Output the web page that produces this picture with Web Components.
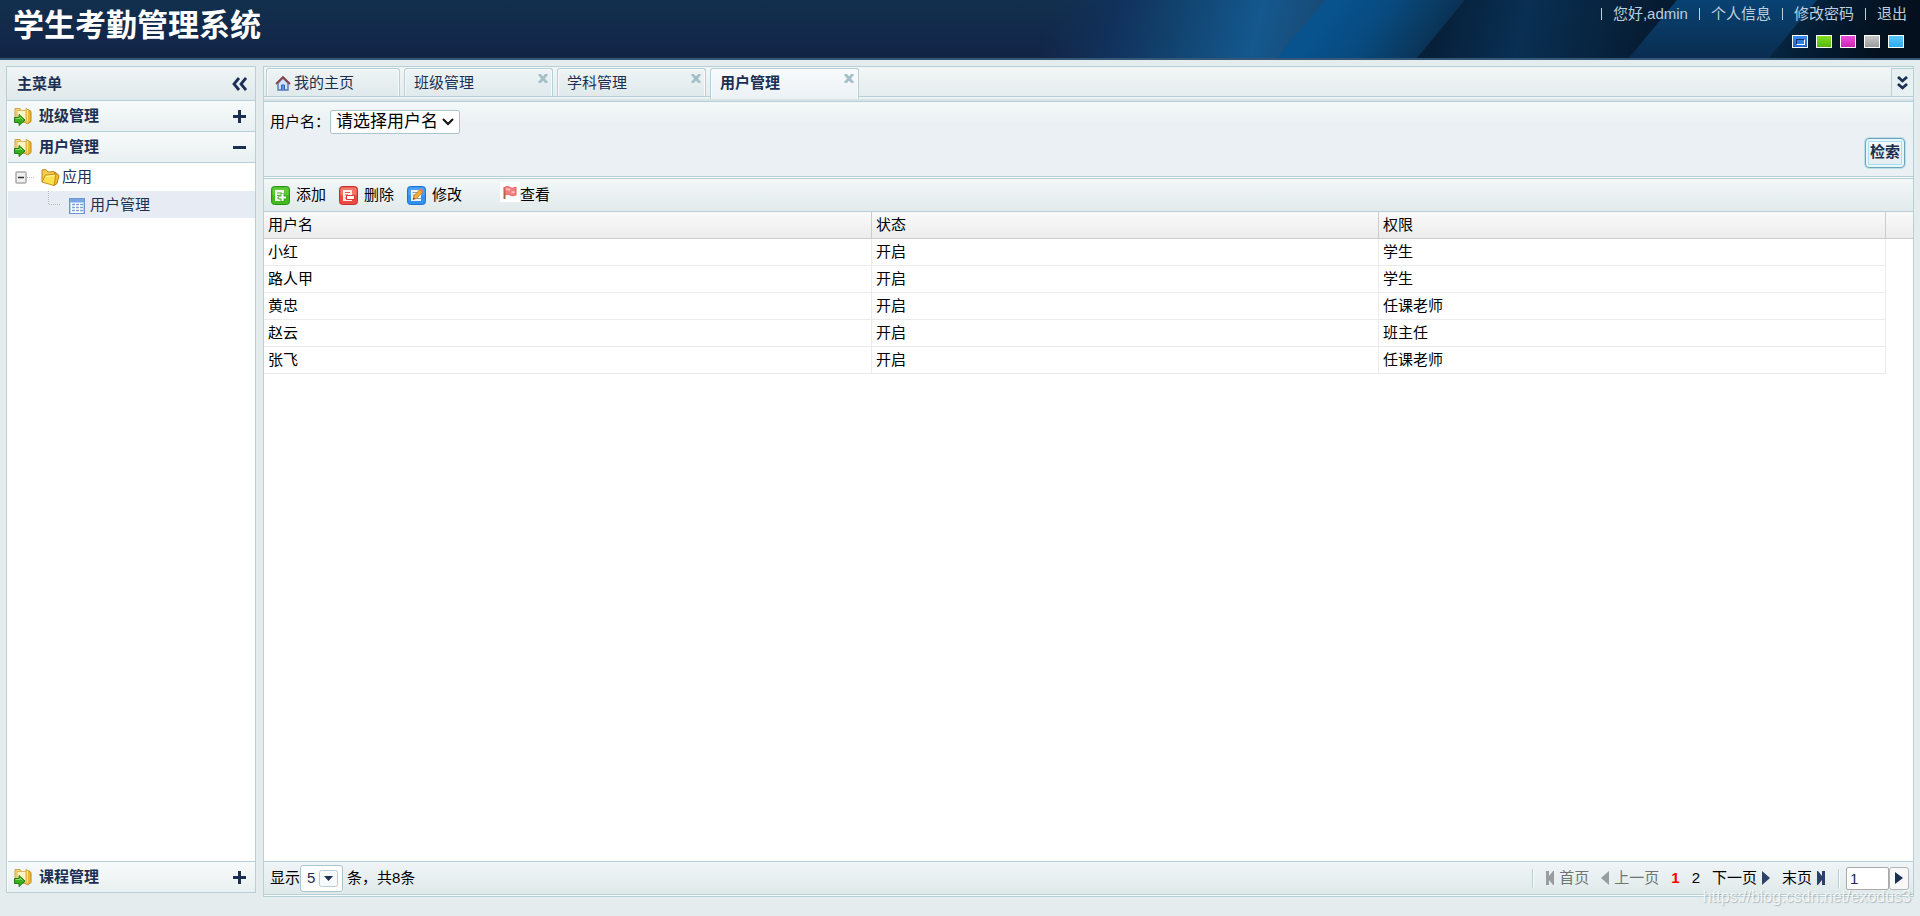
<!DOCTYPE html>
<html lang="zh-CN">
<head>
<meta charset="utf-8">
<title>学生考勤管理系统</title>
<style>
  html, body { margin: 0; height: 100%; }
  body {
    font: 15px/20px "Liberation Sans", "Noto Sans CJK SC", sans-serif;
    color: #000;
    background: #e4ecee;
    --line: #b7cfd6;
    --ink: #1b2f52;
  }
</style>
</head>
<body>
<attendance-app></attendance-app>

<script>
const define = (name, html, setup) => customElements.define(name, class extends HTMLElement {
  connectedCallback() {
    if (this.shadowRoot) return;
    const root = this.attachShadow({ mode: 'open' });
    const template = document.createElement('template');
    template.innerHTML = html;
    root.append(template.content.cloneNode(true));
    if (setup) setup(this, root);
  }
});

const icons = {
  module: `<svg width="20" height="20" viewBox="0 0 20 20"><path d="M2 2.500h5l2 3h4v11H2z" fill="#f4d98a" stroke="#c9a24a"/><path d="M13 2.500l3 1.500v12.500l-3 1z" fill="#fbe285" stroke="#cfa02c"/><path d="M16 4l2 1.500v10L14.500 18" fill="#e9b831" stroke="#bd861b"/><path d="M4 4.500h9v11H4z" fill="#fdf3c2" stroke="#dfb650"/><path d="M1.500 11.500H6V8.500l6 5.500-6 5.500v-3H1.500z" fill="#37b01e" stroke="#1f7d13"/><path d="M2.500 12.500H7V11l2.500 2.500" fill="none" stroke="#8fe064"/></svg>`,
  folder: `<svg width="19" height="19" viewBox="0 0 19 19"><path d="M1 14V2l4-.5 2 2.500 6-.5 1 3" fill="#f5cd4f" stroke="#bd8a1d"/><path d="M14 4l4 3.500-2 8-3 2z" fill="#f2bd2d" stroke="#b97f14"/><path d="M1 14L4.500 7 15 6l-2 11.500z" fill="#fbe04f" stroke="#c4901c"/><path d="M5 8.500l8.500-1" stroke="#fff6b0" fill="none"/></svg>`,
  sheet: `<svg width="16" height="16" viewBox="0 0 16 16"><rect x=".5" y=".5" width="15" height="15" fill="#fff" stroke="#6d96d3"/><path d="M1 1h14v3H1z" fill="#7ba6e4"/><path d="M1.500 4v11M14.500 4v11M1 4.500h14" stroke="#b8d0f2"/><path d="M3 6.500h3M7 6.500h3M11 6.500h3M3 9.500h3M7 9.500h3M11 9.500h3M3 12.500h3M7 12.500h3M11 12.500h3" stroke="#7d9fd2" stroke-width="1.600"/></svg>`,
  add: `<svg width="19" height="19" viewBox="0 0 19 19"><rect x=".5" y=".5" width="18" height="18" rx="3" fill="#43b91f" stroke="#289311"/><rect x="1.500" y="1.500" width="16" height="8" rx="2" fill="#6fd145" opacity=".65"/><path d="M4 4h9v11H4z" fill="#f2faee"/><path d="M6 7h5M6 9.500h3M6 12h3" stroke="#58a83d"/><path d="M11.500 7.500v8M7.500 11.500h8" stroke="#33a114" stroke-width="4"/><path d="M11.500 8v7M8 11.500h7" stroke="#fff" stroke-width="2.200"/></svg>`,
  remove: `<svg width="19" height="19" viewBox="0 0 19 19"><rect x=".5" y=".5" width="18" height="18" rx="3" fill="#e84c42" stroke="#c92c2c"/><rect x="1.500" y="1.500" width="16" height="8" rx="2" fill="#f58b80" opacity=".7"/><path d="M4 4h9v11H4z" fill="#fdeeea"/><path d="M6 6.500h5M6 9h3M6 12h2" stroke="#d95d50"/><rect x="7.500" y="9.500" width="8" height="4" fill="#fff" stroke="#dd3c34"/></svg>`,
  edit: `<svg width="19" height="19" viewBox="0 0 19 19"><rect x=".5" y=".5" width="18" height="18" rx="3" fill="#3290ef" stroke="#1e72d2"/><rect x="1.500" y="1.500" width="16" height="8" rx="2" fill="#62adf7" opacity=".6"/><path d="M4 4h10v11H4z" fill="#eef3f8"/><path d="M5.500 6.500h5M5.500 9h4M10 12.500h4" stroke="#8b9eb4"/><path d="M6 13.500l.8-3.500 6-6.500 3 2.500-6.300 6.500z" fill="#f5ae31" stroke="#a77320" stroke-width=".7"/><path d="M12.300 3.500L13.600 2.200l2.700 2.300-1 1.800z" fill="#ee7a5f"/><path d="M6 13.500l.5-1.800 1.500 1z" fill="#333"/></svg>`,
  flag: `<svg width="20" height="20" viewBox="0 0 20 20"><rect width="20" height="20" fill="#fff"/><path d="M4.500 5v12" stroke="#a36a43" stroke-width="2"/><path d="M4.500 5.500c2-1.500 4.500-1 5.500 0s3 1 6-.5v8c-2.500 1-4.500 1-6 0s-3-.9-4.500 0z" fill="#f47f7f" stroke="#e56262"/><path d="M6 7.500c2-1 3-.3 4 .5M11.500 10c1 .3 2 .2 3-.2" fill="none" stroke="#fcc5c5" stroke-width="1.800"/></svg>`,
  home: `<svg width="16" height="16" viewBox="0 0 16 16"><path d="M3 8v7h10V8L8 3z" fill="#cfe0f7" stroke="#5678b8" stroke-width="1.400"/><path d="M6.500 15v-5h3v5" fill="#5b92e8" stroke="#2f66bd"/><path d="M1 9l7-7 7 7" fill="none" stroke="#8a4144" stroke-width="1.800"/></svg>`
};
const putIcon = (host, root) => {
  const box = root.querySelector('.icon');
  if (box) box.innerHTML = icons[host.getAttribute('icon')] || '';
};

define('header-art', `
<style>
  :host { display: block; position: absolute; top: 0; right: 0; width: 900px; height: 58px; }
  svg { display: block; }
</style>
<svg width="900" height="58" viewBox="1020 0 900 58" aria-hidden="true">
  <defs>
    <linearGradient id="a" gradientUnits="userSpaceOnUse" x1="1050" y1="0" x2="1310" y2="60"><stop offset="0" stop-color="#133052" stop-opacity="0"/><stop offset=".25" stop-color="#11315b"/><stop offset=".5" stop-color="#124470"/><stop offset=".78" stop-color="#14588e"/><stop offset="1" stop-color="#194b76"/></linearGradient>
    <linearGradient id="b" gradientUnits="userSpaceOnUse" x1="1340" y1="0" x2="1430" y2="65"><stop offset="0" stop-color="#08528e"/><stop offset=".4" stop-color="#084a7e"/><stop offset=".75" stop-color="#0a3a61"/><stop offset="1" stop-color="#0b2c4e"/></linearGradient>
    <linearGradient id="c" gradientUnits="userSpaceOnUse" x1="1440" y1="0" x2="1650" y2="50"><stop offset="0" stop-color="#071f38"/><stop offset=".4" stop-color="#092f52"/><stop offset=".75" stop-color="#08243f"/><stop offset="1" stop-color="#061b31"/></linearGradient>
    <linearGradient id="d" x1="0" y1="0" x2="0" y2="1"><stop offset="0" stop-color="#084273"/><stop offset="1" stop-color="#0a2d51"/></linearGradient>
    <linearGradient id="e" gradientUnits="userSpaceOnUse" x1="1790" y1="0" x2="1880" y2="50"><stop offset="0" stop-color="#072844"/><stop offset=".5" stop-color="#051a2f"/><stop offset="1" stop-color="#04101d"/></linearGradient>
  </defs>
  <path d="M1020 0h306l-47 58h-259z" fill="url(#a)"/>
  <path d="M1325 0h140l-48 58h-140z" fill="url(#b)"/>
  <path d="M1465 0h212l-48 58h-212z" fill="url(#c)"/>
  <path d="M1677 0h140l-48 58h-140z" fill="url(#d)"/>
  <path d="M1817 0h103v58h-151z" fill="url(#e)"/>
</svg>`);

define('app-header', `
<style>
  :host {
    display: flex; justify-content: space-between; position: relative;
    height: 58px; flex: none; border-bottom: 2px solid #365878;
    background: linear-gradient(#12304d, #12274a 70%, #132445);
  }
  h1 { margin: 0; padding: 5px 13px; font-size: 31px; line-height: 42px; color: #fff; position: relative; }
  .side { position: relative; display: flex; flex-direction: column; align-items: flex-end; gap: 11px; padding: 4px 13px 0 0; }
  nav { display: flex; gap: 11px; color: #bccfdd; }
  nav > * { display: flex; align-items: center; gap: 11px; line-height: 20px; color: inherit; text-decoration: none; }
  nav > *::before { content: ""; width: 1px; height: 12px; background: #bccfdd; }
  .themes { display: flex; gap: 8px; padding-right: 3px; }
  .themes button { width: 16px; height: 13px; padding: 0; border: 1px solid #fff; background: linear-gradient(var(--top), var(--bottom)); }
  .themes button.on { display: flex; align-items: center; justify-content: center; }
  .on i { width: 7px; height: 4px; border: 1px solid #fff; border-top-color: #173461; border-left-color: #173461; background: #2f7fe0; }
</style>
<header-art></header-art>
<h1>学生考勤管理系统</h1>
<div class="side">
  <nav><span>您好,admin</span><a href="#info">个人信息</a><a href="#password">修改密码</a><a href="#logout">退出</a></nav>
  <div class="themes">
    <button class="on" aria-label="蓝色主题" style="--top:#3c8df0;--bottom:#1f62c8"><i></i></button>
    <button aria-label="绿色主题" style="--top:#83de1f;--bottom:#55b912"></button>
    <button aria-label="粉色主题" style="--top:#ee4fdc;--bottom:#cc25b6"></button>
    <button aria-label="灰色主题" style="--top:#c8c8c8;--bottom:#9a9a9a"></button>
    <button aria-label="浅蓝主题" style="--top:#5cc6fb;--bottom:#2eaaf0"></button>
  </div>
</div>`);

define('menu-item', `
<style>
  :host { display: block; flex: none; border-bottom: 1px solid var(--line); }
  :host([last]) { border-top: 1px solid var(--line); border-bottom: 0; }
  button {
    display: flex; align-items: center; gap: 6px; width: 100%; height: 30px; padding: 0 9px 0 5px;
    border: 0; background: linear-gradient(#f7fafa, #e9f0f1);
    font: bold 15px/20px "Liberation Sans", "Noto Sans CJK SC", sans-serif; color: var(--ink); text-align: left;
  }
  .icon { display: flex; }
  .label { flex: 1; }
  .sign { display: block; }
</style>
<button><span class="icon">${icons.module}</span><span class="label"><slot></slot></span>
<svg class="sign" width="13" height="13" viewBox="0 0 13 13"><path stroke="#1b2f52" stroke-width="3"/></svg></button>`,
(host, root) => {
  const open = host.hasAttribute('open');
  root.querySelector('.sign path').setAttribute('d', open ? 'M0 6.5h13' : 'M0 6.5h13M6.5 0v13');
  root.querySelector('button').setAttribute('aria-expanded', open);
});

define('menu-tree', `
<style>
  :host { display: block; flex: 1; color: var(--ink); }
  .row { display: flex; align-items: center; height: 28px; padding-left: 7px; }
  .leaf { height: 27px; padding-left: 40px; background: #e7ecf4; color: inherit; text-decoration: none; }
  svg { flex: none; }
  .folder { display: flex; margin: 0 2px 0 7px; }
  .sheet { display: flex; padding: 2px 5px 0 8px; }
</style>
<div class="row">
  <svg width="19" height="13" viewBox="0 0 19 13"><rect x="1" y="1" width="10" height="11" rx="1" fill="#f0f0f0" stroke="#aaa" stroke-width="1.500"/><path d="M3 6.500h6" stroke="#333" stroke-width="1.500"/><path d="M12 6.500h7" stroke="#bbb" stroke-dasharray="1 1"/></svg>
  <span class="folder">${icons.folder}</span><span>应用</span>
</div>
<a class="row leaf" href="#users">
  <svg width="13" height="27" viewBox="0 0 13 27"><path d="M.5 0v13.500H13" fill="none" stroke="#bbb" stroke-dasharray="1 1"/></svg>
  <span class="sheet">${icons.sheet}</span><span>用户管理</span>
</a>`);

define('side-menu', `
<style>
  :host { display: flex; flex-direction: column; width: 248px; border: 1px solid var(--line); background: #fff; flex: none; }
  header {
    display: flex; align-items: center; justify-content: space-between; height: 33px; padding: 0 8px 0 10px;
    border-bottom: 1px solid var(--line); background: linear-gradient(#f0f5f6, #e0e9eb);
    font-weight: bold; color: var(--ink);
  }
  header button { display: flex; padding: 0; border: 0; background: none; }
  .items { display: flex; flex-direction: column; flex: 1; padding-left: 1px; }
</style>
<header><span>主菜单</span><button aria-label="收起菜单"><svg width="15" height="14" viewBox="0 0 15 14"><path d="M7 1L2 7l5 6M14 1L9 7l5 6" fill="none" stroke="#1b2f52" stroke-width="2.800"/></svg></button></header>
<div class="items">
  <menu-item>班级管理</menu-item>
  <menu-item open>用户管理</menu-item>
  <menu-tree></menu-tree>
  <menu-item last>课程管理</menu-item>
</div>`);

define('tab-item', `
<style>
  :host {
    display: flex; box-sizing: border-box; width: 149px; height: 28px; padding: 0 4px 0 9px;
    border: 1px solid var(--line); border-bottom: 0; border-radius: 3px 3px 0 0;
    background: linear-gradient(#eef4f5, #e0e9eb); box-shadow: inset 1px 1px #f8fbfb, inset -1px 0 #f8fbfb; color: var(--ink);
  }
  :host([icon]) { width: 134px; padding-left: 8px; }
  :host([active]) { height: 31px; font-weight: bold; background: linear-gradient(#f8fbfd, #ebf1f5); }
  a { display: flex; align-items: center; gap: 3px; flex: 1; height: 27px; color: inherit; text-decoration: none; }
  .icon { display: flex; }
  .icon:empty { display: none; }
  button { display: flex; align-self: flex-start; padding: 5px 0 0; border: 0; background: none; }
  :host([icon]) button { display: none; }
</style>
<a href="#tab"><span class="icon"></span><span><slot></slot></span></a>
<button aria-label="关闭"><svg width="10" height="9" viewBox="0 0 10 9"><path d="M1 0l8 9M9 0L1 9" stroke="#a3bfc7" stroke-width="2.800"/></svg></button>`, putIcon);

define('tab-strip', `
<style>
  :host { display: flex; align-items: flex-start; gap: 4px; flex: none; height: 33px; padding: 1px 0 0 2px;
    border-bottom: 1px solid var(--line);
    background: linear-gradient(transparent 29px, var(--line) 29px, var(--line) 30px, #edf3f5 30px, #edf3f5 32px, #d6e3e7 32px), linear-gradient(#f2f6f6, #e5edef 29px); }
  .more { display: flex; align-items: center; justify-content: center; width: 22px; height: 28px; margin-left: auto; padding: 0;
    border: 1px solid var(--line); border-width: 1px 0 0 1px; background: #e9f0f2; }
</style>
<tab-item icon="home">我的主页</tab-item>
<tab-item>班级管理</tab-item>
<tab-item>学科管理</tab-item>
<tab-item active>用户管理</tab-item>
<button class="more" aria-label="更多标签"><svg width="11" height="14" viewBox="0 0 11 14"><path d="M1 1l4.500 4L10 1M1 8l4.500 4L10 8" fill="none" stroke="#1b2f52" stroke-width="2.800"/></svg></button>`);

define('search-panel', `
<style>
  :host { display: flex; justify-content: space-between; box-sizing: border-box; flex: none; height: 75px; padding: 8px 8px 8px 6px;
    border-bottom: 1px solid var(--line); background: linear-gradient(#f3f8f8, #ebf0f4 22px, #ebf0f4); }
  .field { display: flex; align-items: center; align-self: flex-start; }
  select { appearance: none; width: 130px; height: 24px; padding: 0 0 0 5px; border: 1px solid #a9c5cd; border-radius: 2px; color: #000;
    font: 17px/22px "Liberation Sans", "Noto Sans CJK SC", sans-serif;
    background: #fff url("data:image/svg+xml,%3Csvg xmlns='http://www.w3.org/2000/svg' width='12' height='8'%3E%3Cpath d='M1 1l5 5 5-5' fill='none' stroke='%23111' stroke-width='2'/%3E%3C/svg%3E") no-repeat right 5px center; }
  .go { align-self: flex-end; box-sizing: border-box; width: 40px; height: 30px; padding: 0 0 3px; border: 1px solid #6fa3b8; border-radius: 4px;
    background: linear-gradient(#f5f9fa, #e3ecf0); box-shadow: 0 0 0 1px #b9dfeb, inset 0 0 0 2px #e6f6fb, inset 0 0 0 3px #a8def0;
    font: bold 15px/20px "Liberation Sans", "Noto Sans CJK SC", sans-serif; color: var(--ink); }
</style>
<div class="field"><label for="user">用户名：</label><select id="user"><option>请选择用户名</option></select></div>
<button class="go">检索</button>`);

define('tool-button', `
<style>
  :host { display: block; }
  button { display: flex; align-items: center; gap: 6px; padding: 0; border: 0; background: none; color: #000;
    font: 15px/20px "Liberation Sans", "Noto Sans CJK SC", sans-serif; }
  :host([icon="flag"]) { margin-left: 25px; }
  :host([icon="flag"]) button { gap: 0; }
  :host([icon="flag"]) .icon { padding-bottom: 6px; }
  .icon { display: flex; }
</style>
<button><span class="icon"></span><slot></slot></button>`, putIcon);

define('tool-bar', `
<style>
  :host { display: flex; align-items: center; gap: 13px; flex: none; height: 32px; margin-top: 1px; padding-left: 7px;
    border: 1px solid var(--line); border-width: 1px 0; background: linear-gradient(#f3f7f8, #e1eaec); box-shadow: 0 -1px #f8fbfb; }
</style>
<tool-button icon="add">添加</tool-button>
<tool-button icon="remove">删除</tool-button>
<tool-button icon="edit">修改</tool-button>
<tool-button icon="flag">查看</tool-button>`);

define('user-table', `
<style>
  :host { display: block; flex: 1; background: #fff; }
  table { width: 100%; table-layout: fixed; border-collapse: separate; border-spacing: 0; }
  .name { width: 36.87%; }
  .state { width: 30.75%; }
  th, td { box-sizing: border-box; height: 27px; padding: 0 4px; text-align: left; font-weight: normal; line-height: 20px; }
  th { border-bottom: 1px solid #ccc; border-right: 1px solid #ccc; background: linear-gradient(#fafafa, #ececec); }
  th:last-child { border-right: 0; }
  td { border-bottom: 1px solid #ebebeb; border-right: 1px solid #ebebeb; }
</style>
<table>
  <colgroup><col class="name"><col class="state"><col class="state"><col></colgroup>
  <thead><tr><th>用户名</th><th>状态</th><th>权限</th><th></th></tr></thead>
  <tbody></tbody>
</table>`, (host, root) => {
  const rows = [['小红', '开启', '学生'], ['路人甲', '开启', '学生'], ['黄忠', '开启', '任课老师'], ['赵云', '开启', '班主任'], ['张飞', '开启', '任课老师']];
  root.querySelector('tbody').innerHTML = rows.map(r => '<tr>' + r.map(c => `<td>${c}</td>`).join('') + '</tr>').join('');
});

define('page-bar', `
<style>
  :host { display: flex; align-items: center; justify-content: space-between; flex: none; height: 32px; padding: 0 4px 0 6px;
    border: 1px solid var(--line); border-width: 1px 0; margin-bottom: 1px; background: linear-gradient(#f0f5f6, #e0e9ea); }
  .size, .pages, form { display: flex; align-items: center; }
  .size select { appearance: none; width: 43px; height: 27px; margin-right: 4px; padding: 0 0 0 6px; border: 1px solid #a9c5cd; border-radius: 3px; color: var(--ink);
    font: 15px/20px "Liberation Sans", sans-serif;
    background: #fff url("data:image/svg+xml,%3Csvg xmlns='http://www.w3.org/2000/svg' width='19' height='17'%3E%3Crect x='.5' y='.5' width='18' height='16' rx='2' fill='%23f7fafa' stroke='%23b7cfd6'/%3E%3Cpath d='M5 6h9l-4.500 5z' fill='%231b2f52'/%3E%3C/svg%3E") no-repeat right 4px center; }
  .pages { gap: 12px; }
  a { display: flex; align-items: center; gap: 4px; color: #000; text-decoration: none; }
  a.off { color: #6f7476; }
  a.now { color: #f00; font-weight: bold; }
  .sep { width: 1px; height: 19px; background: var(--line); box-shadow: 1px 0 #f8fbfb; }
  input { box-sizing: border-box; width: 43px; height: 23px; padding: 0 3px; border: 1px solid #aaa; border-radius: 2px; background: #fff; color: var(--ink); font: 15px/20px "Liberation Sans", sans-serif; }
  form { margin-left: -5px; }
  form button { display: flex; align-items: center; justify-content: center; width: 20px; height: 23px; padding: 0; border: 1px solid #b5b5b5; border-radius: 3px; background: #f8f8f8; }
</style>
<div class="size"><label for="rows">显示</label><select id="rows"><option>5</option></select><span>条，共8条</span></div>
<div class="pages">
  <span class="sep"></span>
  <a class="off" href="#first"><svg width="10" height="14" viewBox="0 0 10 14"><path d="M1 0h3v5l4-5h1v14H8L4 9v5H1z" fill="#9a9d9f"/></svg>首页</a>
  <a class="off" href="#prev"><svg width="9" height="14" viewBox="0 0 9 14"><path d="M8 0v14L0 7z" fill="#9a9d9f"/></svg>上一页</a>
  <a class="now" href="#1">1</a>
  <a href="#2">2</a>
  <a href="#next">下一页<svg width="9" height="14" viewBox="0 0 9 14"><path d="M1 0v14l8-7z" fill="#2c4268"/></svg></a>
  <a href="#last">末页<svg width="10" height="14" viewBox="0 0 10 14"><path d="M9 0H6v5L2 0H1v14h1l4-5v5h3z" fill="#2c4268"/></svg></a>
  <span class="sep"></span>
  <form><input aria-label="页码" value="1"><button type="button" aria-label="跳转"><svg width="8" height="12" viewBox="0 0 8 12"><path d="M0 0v12l8-6z" fill="#1b2f52"/></svg></button></form>
</div>`);

define('main-panel', `
<style>:host { display: flex; flex-direction: column; flex: 1; min-width: 0; border: 1px solid var(--line); background: #f8fbfb; }</style>
<tab-strip></tab-strip>
<search-panel></search-panel>
<tool-bar></tool-bar>
<user-table></user-table>
<page-bar></page-bar>`);

define('attendance-app', `
<style>
  :host { display: flex; flex-direction: column; min-height: 100%; position: relative; }
  main { display: flex; flex: 1; gap: 7px; padding: 6px 6px 19px; }
  side-menu { margin-bottom: 4px; }
  .mark { position: absolute; right: 9px; bottom: 9px; font-size: 16px; line-height: 20px; color: rgba(255,255,255,.75); text-shadow: 1px 1px 1px rgba(130,145,150,.55); }
</style>
<app-header></app-header>
<main><side-menu></side-menu><main-panel></main-panel></main>
<span class="mark">https://blog.csdn.net/exodus3</span>`);
</script>
</body>
</html>
